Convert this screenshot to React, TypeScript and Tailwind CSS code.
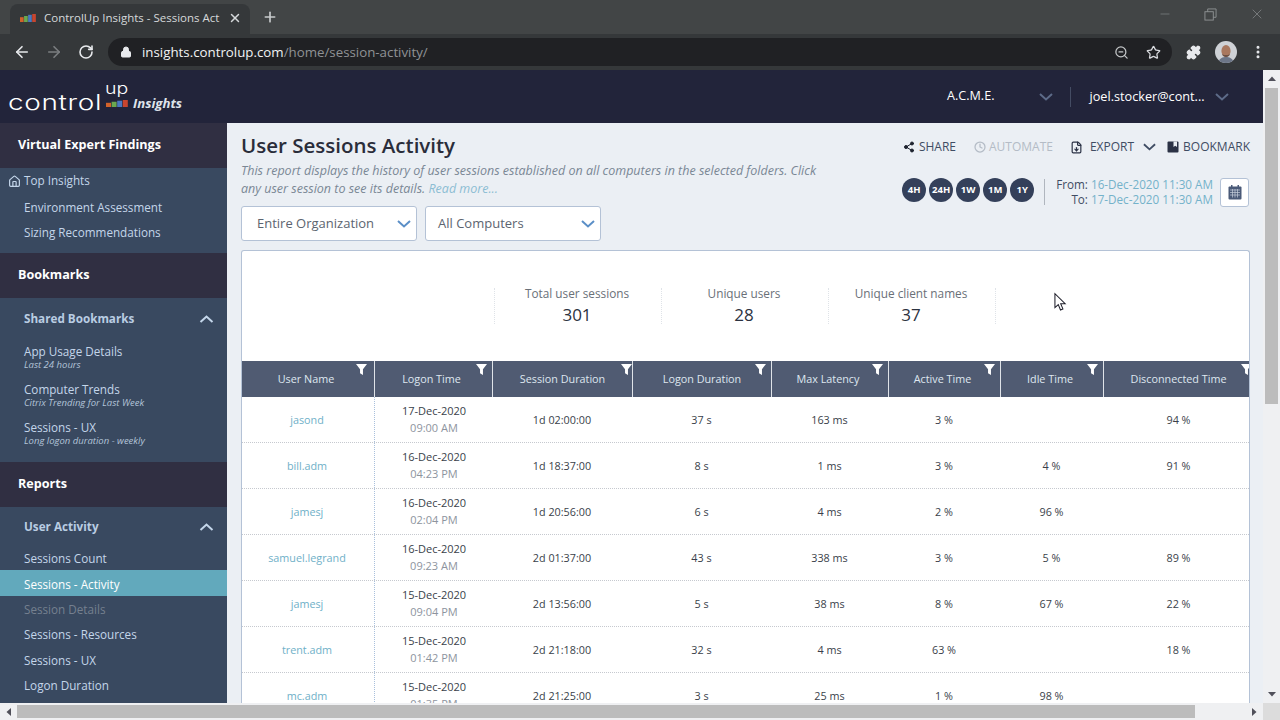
import React from 'react'
import { ArrowLeft, ArrowRight, RotateCw, Lock, ZoomOut, Star, Puzzle, MoreVertical, X, Plus, Minus, Home, Share2, Clock, FileDown } from 'lucide-react'

const rows = [
    ['jasond', '17-Dec-2020', '09:00 AM', '1d 02:00:00', '37 s', '163 ms', '3 %', '', '94 %'],
    ['bill.adm', '16-Dec-2020', '04:23 PM', '1d 18:37:00', '8 s', '1 ms', '3 %', '4 %', '91 %'],
    ['jamesj', '16-Dec-2020', '02:04 PM', '1d 20:56:00', '6 s', '4 ms', '2 %', '96 %', ''],
    ['samuel.legrand', '16-Dec-2020', '09:23 AM', '2d 01:37:00', '43 s', '338 ms', '3 %', '5 %', '89 %'],
    ['jamesj', '15-Dec-2020', '09:04 PM', '2d 13:56:00', '5 s', '38 ms', '8 %', '67 %', '22 %'],
    ['trent.adm', '15-Dec-2020', '01:42 PM', '2d 21:18:00', '32 s', '4 ms', '63 %', '', '18 %'],
    ['mc.adm', '15-Dec-2020', '01:35 PM', '2d 21:25:00', '3 s', '25 ms', '1 %', '98 %', ''],
]

const columns = ['User Name', 'Logon Time', 'Session Duration', 'Logon Duration', 'Max Latency', 'Active Time', 'Idle Time', 'Disconnected Time']

const gridCols = 'grid grid-cols-[133px_118px_140px_139px_117px_112px_103px_153px]'

function BarsIcon({ className }: { className?: string }) {
    return (
        <svg viewBox="0 0 22 10" preserveAspectRatio="none" className={className}>
            <rect x="0" y="4" width="5" height="6" fill="#d2622a" />
            <rect x="5.6" y="2.5" width="5" height="7.5" fill="#6aa84f" />
            <rect x="11.2" y="1" width="5" height="9" fill="#4a78c0" />
            <rect x="16.8" y="0" width="5" height="10" fill="#c8452f" />
        </svg>
    )
}

// wide flat chevron, the lucide one is too narrow for this UI
function Chev({ className, up }: { className?: string; up?: boolean }) {
    return (
        <svg viewBox="0 0 14 8" fill="none" stroke="currentColor" strokeWidth="2" className={className}>
            <path d={up ? 'M1 7L7 1.5L13 7' : 'M1 1L7 6.5L13 1'} />
        </svg>
    )
}

function FilterIcon({ pos }: { pos: string }) {
    return (
        <svg viewBox="0 0 12 12" className={`w-[11px] h-[11px] absolute top-[3px] ${pos}`}>
            <path d="M0 0H12L7.6 5.6V12L4.4 10V5.6Z" fill="#fff" />
        </svg>
    )
}

function Cursor() {
    return (
        <svg viewBox="0 0 14 20" className="w-[13px] h-[20px] absolute left-[1054px] top-[292px]">
            <path d="M1 1V16L4.6 12.8L7 18.6L9.6 17.4L7.2 11.8H12Z" fill="#fff" stroke="#1c1c28" strokeWidth="1.1" />
        </svg>
    )
}

function Avatar() {
    return (
        <svg viewBox="0 0 22 22" className="w-[22px] h-[22px] rounded-full">
            <rect width="22" height="22" fill="#cfd2d6" />
            <path d="M3 22C4 17 8 16 11 16C14 16 18 17 19 22Z" fill="#6d7688" />
            <ellipse cx="11" cy="10" rx="4.6" ry="6" fill="#a9785f" />
            <path d="M7 13C8 17 14 17 15 13L13 14H9Z" fill="#6c5146" />
        </svg>
    )
}

function BookmarkIcon() {
    return (
        <svg viewBox="0 0 12 12" className="w-[12px] h-[12px] mr-[4px]">
            <rect x="0.5" y="0.5" width="11" height="11" rx="1" fill="#2b3245" />
            <path d="M6.5 0.5H10V6L8.2 4.8L6.5 6Z" fill="#ebeff4" />
        </svg>
    )
}

function CalendarIcon() {
    return (
        <svg viewBox="0 0 14 15" className="w-[14px] h-[15px]">
            <rect x="0.5" y="1.5" width="13" height="13" rx="1" fill="#4a5a78" />
            <rect x="3" y="0" width="1.5" height="3" fill="#4a5a78" />
            <rect x="9.5" y="0" width="1.5" height="3" fill="#4a5a78" />
            <path d="M2 5H12M2 7.5H12M2 10H12M4.5 4V12.5M7 4V12.5M9.5 4V12.5" stroke="#c6cedb" strokeWidth="0.7" />
        </svg>
    )
}

function NavHeader({ title }: { title: string }) {
    return (
        <div className="h-[45px] bg-[#302f42] flex items-center pl-[18px] text-[12.6px] font-bold text-white shrink-0">{title}</div>
    )
}

function NavItem({ label, active, muted, h = 'h-[26px]', pt = 'pt-[1px]' }: { label: string; active?: boolean; muted?: boolean; h?: string; pt?: string }) {
    return (
        <div className={`${h} ${pt} flex items-center pl-[24px] text-[11.7px] ${active ? 'bg-[#62a9bc] text-white' : muted ? 'text-[#75808f]' : 'text-[#c4d6ea]'}`}>
            {label}
        </div>
    )
}

function NavGroupTitle({ label, h }: { label: string; h: string }) {
    return (
        <div className={`${h} flex items-center justify-between pl-[24px] pr-[13px] pt-[2px] text-[11.7px] font-bold text-[#b9cde3]`}>
            {label}
            <Chev up className="w-[15px] h-[8px] text-[#c4d6ea]" />
        </div>
    )
}

function Bookmarked({ label, sub }: { label: string; sub: string }) {
    return (
        <div className="h-[38px] flex flex-col justify-center pl-[24px]">
            <div className="text-[11.7px] leading-[16px] text-[#c4d6ea]">{label}</div>
            <div className="text-[9.5px] leading-[12px] italic text-[#b3c4d8]">{sub}</div>
        </div>
    )
}

function Sidebar() {
    return (
        <div className="w-[227px] shrink-0 bg-[#394960] overflow-hidden flex flex-col">
            <NavHeader title="Virtual Expert Findings" />
            <div className="pb-[8px]">
                <div className="h-[26px] flex items-center pl-[8px] gap-[3px] text-[11.7px] text-[#c4d6ea]">
                    <Home className="w-[13px] h-[13px]" strokeWidth={2.2} />
                    Top Insights
                </div>
                <NavItem label="Environment Assessment" />
                <NavItem label="Sizing Recommendations" h="h-[25px]" />
            </div>
            <NavHeader title="Bookmarks" />
            <div className="pb-[10px]">
                <NavGroupTitle label="Shared Bookmarks" h="h-[40px]" />
                <Bookmarked label="App Usage Details" sub="Last 24 hours" />
                <Bookmarked label="Computer Trends" sub="Citrix Trending for Last Week" />
                <Bookmarked label="Sessions - UX" sub="Long logon duration - weekly" />
            </div>
            <NavHeader title="Reports" />
            <NavGroupTitle label="User Activity" h="h-[37px]" />
            <NavItem label="Sessions Count" pt="pt-[3px]" />
            <NavItem label="Sessions - Activity" active pt="pt-[3px]" />
            <NavItem label="Session Details" muted />
            <NavItem label="Sessions - Resources" h="h-[25px]" />
            <NavItem label="Sessions - UX" />
            <NavItem label="Logon Duration" h="h-[25px]" />
        </div>
    )
}

function SelectBox({ label, pl }: { label: string; pl: string }) {
    return (
        <div className={`w-[176px] h-[35px] bg-white border border-[#b4c2d6] rounded-[3px] flex items-center justify-between ${pl} pr-[5px] text-[13px] text-[#5c6470]`}>
            {label}
            <Chev className="w-[14px] h-[8px] text-[#5b8fc7]" />
        </div>
    )
}

function Stat({ label, value }: { label: string; value: string }) {
    return (
        <div className="w-[167px] h-[36px] pr-[2px] border-r border-dotted border-[#dfe3e8] flex flex-col items-center justify-center">
            <div className="text-[11.8px] leading-[16px] text-[#6a7078]">{label}</div>
            <div className="mt-[2px] text-[17px] leading-[24px] text-[#2c3240]">{value}</div>
        </div>
    )
}

function ReportTable() {
    return (
        <div className="mt-[9px] w-[1009px] bg-white border-l border-r border-t border-[#b4c2d6] rounded-t-[3px] flex-1 overflow-hidden">
            <div className="h-[110px] flex items-center pl-[252px]">
                <div className="w-0 h-[36px] border-r border-dotted border-[#dfe3e8]" />
                <Stat label="Total user sessions" value="301" />
                <Stat label="Unique users" value="28" />
                <Stat label="Unique client names" value="37" />
            </div>
            <div className={`${gridCols} h-[36px] bg-[#505b72]`}>
                {columns.map((c, i) => (
                    <div key={c} className={`relative flex items-center justify-center text-[10.8px] text-[#dfe7f0] pt-[1px] ${i === 2 || i === 3 ? '' : 'pr-[4px]'} ${i < 7 ? 'border-r border-[#dfe3e8]' : ''}`}>
                        {c}
                        <FilterIcon pos={i === 2 ? 'right-[0px]' : i === 0 ? 'right-[7px]' : 'right-[5px]'} />
                    </div>
                ))}
            </div>
            {rows.map((r, i) => (
                <div key={i} className={`${gridCols} h-[46px] border-b border-dotted border-[#c6c9cf] text-[10.8px] text-[#3a3f4a]`}>
                    <div className="flex items-center justify-center pt-[2px] pr-[2px] border-r border-dotted border-[#a9c0dc] text-[#6fb0c8]">{r[0]}</div>
                    <div className="flex flex-col items-center justify-center pb-[2px] text-[11px]">
                        <div className="leading-[17px]">{r[1]}</div>
                        <div className="leading-[17px] text-[#8d949e]">{r[2]}</div>
                    </div>
                    {r.slice(3).map((v, j) => (
                        <div key={j} className={`flex items-center justify-center pt-[2px] ${j === 5 ? 'pr-[4px]' : 'pr-[2px]'}`}>{v}</div>
                    ))}
                </div>
            ))}
        </div>
    )
}

function ScrollArrow({ d }: { d: string }) {
    return (
        <svg viewBox="0 0 8 8" className="w-[8px] h-[8px]">
            <path d={d} fill="#50505a" />
        </svg>
    )
}

function Main() {
    return (
        <div className="flex-1 bg-[#ebeff4] pl-[14px] overflow-hidden flex flex-col min-w-0">
            <div className="flex justify-between w-[1009px]">
                <div>
                    <h1 className="mt-[8px] text-[20.5px] leading-[28px] font-semibold text-[#2a2d3a]">User Sessions Activity</h1>
                    <p className="mt-[3px] w-[590px] text-[12.5px] leading-[18px] italic text-[#7a8795]">
                        This report displays the history of user sessions established on all computers in the selected folders. Click any user session to see its details. <span className="text-[#8cbdd3]">Read more...</span>
                    </p>
                    <div className="mt-[8px] flex gap-[8px]">
                        <SelectBox label="Entire Organization" pl="pl-[15px]" />
                        <SelectBox label="All Computers" pl="pl-[12px]" />
                    </div>
                </div>
                <div className="flex flex-col items-end">
                    <div className="mt-[15px] h-[18px] flex items-center text-[12px] text-[#3f4c63]">
                        <Share2 className="w-[12px] h-[12px] mr-[4px] text-[#1f2430]" fill="#1f2430" />
                        SHARE
                        <Clock className="w-[12px] h-[12px] ml-[18px] mr-[3px] text-[#b4bcc6]" strokeWidth={2.5} />
                        <span className="text-[#b4bcc6]">AUTOMATE</span>
                        <FileDown className="w-[13px] h-[13px] ml-[17px] mr-[7px] text-[#2b3245]" strokeWidth={2.2} />
                        EXPORT
                        <Chev className="w-[13px] h-[8px] ml-[9px] mr-[11px] text-[#3f4c63]" />
                        <BookmarkIcon />
                        BOOKMARK
                    </div>
                    <div className="mt-[21px] flex items-center mr-[1px]">
                        <div className="flex gap-[3px] mb-[4px]">
                            {['4H', '24H', '1W', '1M', '1Y'].map((t) => (
                                <div key={t} className="w-[24px] h-[24px] rounded-full bg-[#34405a] text-white text-[9.5px] font-bold flex items-center justify-center">{t}</div>
                            ))}
                        </div>
                        <div className="ml-[10px] w-px h-[26px] bg-[#b0b6be]" />
                        <div className="ml-[11px] text-[11.7px] leading-[15px] text-right text-[#3f4c63]">
                            <div>From: <span className="text-[#74b2ca]">16-Dec-2020 11:30 AM</span></div>
                            <div>To: <span className="text-[#74b2ca]">17-Dec-2020 11:30 AM</span></div>
                        </div>
                        <div className="ml-[7px] w-[29px] h-[29px] bg-white border border-[#b4c2d6] rounded-[3px] flex items-center justify-center">
                            <CalendarIcon />
                        </div>
                    </div>
                </div>
            </div>
            <ReportTable />
        </div>
    )
}

export default function App() {
    return (
        <div className="relative w-[1280px] h-[720px] overflow-hidden flex flex-col font-['Open_Sans',sans-serif]">
            <div className="h-[34px] bg-[#424546] flex items-end shrink-0 pl-[10px]">
                <div className="w-[240px] h-[30px] pb-[2px] bg-[#35383a] rounded-t-[8px] flex items-center pl-[10px] pr-[8px] text-[11.5px] text-[#d5d8da]">
                    <BarsIcon className="w-[16px] h-[8px] mr-[8px]" />
                    <span className="flex-1 whitespace-nowrap overflow-hidden">ControlUp Insights - Sessions Act</span>
                    <X className="w-[14px] h-[14px] ml-[6px] text-[#d5d8da]" strokeWidth={2.5} />
                </div>
                <Plus className="w-[16px] h-[16px] ml-[12px] mb-[9px] text-[#c7cacc]" strokeWidth={2.5} />
                <div className="ml-auto flex items-center self-start mt-[6px] mr-[15px] gap-[32px] text-[#8f9294]">
                    <Minus className="w-[14px] h-[14px]" strokeWidth={1} />
                    <svg viewBox="0 0 14 14" className="w-[13px] h-[13px]" fill="none" stroke="currentColor">
                        <rect x="1" y="4" width="9" height="9" />
                        <path d="M4 4V1H13V10H10" />
                    </svg>
                    <X className="w-[16px] h-[16px]" strokeWidth={1} />
                </div>
            </div>
            <div className="h-[36px] bg-[#35383a] flex items-center shrink-0 pl-[13px] pr-[11px]">
                <ArrowLeft className="w-[18px] h-[18px] text-[#e8eaed]" strokeWidth={2.2} />
                <ArrowRight className="w-[18px] h-[18px] ml-[14px] text-[#7b7e80]" strokeWidth={2.2} />
                <RotateCw className="w-[16px] h-[16px] ml-[15px] text-[#e8eaed]" strokeWidth={2.4} />
                <div className="ml-[14px] w-[1064px] h-[28px] bg-[#202124] rounded-full flex items-center pl-[12px] pr-[11px] text-[13.3px]">
                    <Lock className="w-[12px] h-[12px] mr-[10px] text-[#e8eaed]" fill="#e8eaed" />
                    <span className="text-[#f1f3f4] pt-[1px]">insights.controlup.com</span>
                    <span className="text-[#8f9295] pt-[1px]">/home/session-activity/</span>
                    <ZoomOut className="w-[15px] h-[15px] ml-auto text-[#c4c7c9]" strokeWidth={2} />
                    <Star className="w-[15px] h-[15px] ml-[17px] text-[#dadce0]" strokeWidth={2} />
                </div>
                <Puzzle className="w-[15px] h-[15px] ml-[14px] text-[#e8eaed]" fill="#e8eaed" />
                <div className="ml-[14px]"><Avatar /></div>
                <MoreVertical className="w-[16px] h-[16px] ml-[13px] text-[#e8eaed]" strokeWidth={2.5} />
            </div>
            <div className="flex-1 flex min-h-0">
                <div className="flex-1 flex flex-col min-w-0">
                    <div className="h-[53px] bg-[#22243a] flex items-center shrink-0 pl-[9px] text-white">
                        <div className="relative w-[175px] h-[30px]">
                            <span className="absolute left-[-1px] top-[9px] origin-left scale-x-[1.33] text-[21px] leading-[24px] font-light font-['Inter',sans-serif] tracking-[0.5px]">control</span>
                            <span className="absolute left-[96px] top-[-1px] origin-left scale-x-[1.3] text-[15px] leading-[16px] font-light font-['Inter',sans-serif]">up</span>
                            <BarsIcon className="absolute left-[97px] top-[18px] w-[22px] h-[7px]" />
                            <span className="absolute left-[124px] top-[13px] text-[13.2px] leading-[16px] font-bold italic text-[#dfe3ea]">Insights</span>
                        </div>
                        <span className="ml-[763px] text-[12.6px]">A.C.M.E.</span>
                        <Chev className="w-[14px] h-[8px] ml-[45px] text-[#5d6b88]" />
                        <div className="ml-[17px] w-px h-[20px] bg-[#444c63]" />
                        <span className="ml-[18px] text-[12.7px]">joel.stocker@cont...</span>
                        <Chev className="w-[14px] h-[8px] ml-[10px] text-[#5d6b88]" />
                    </div>
                    <div className="flex-1 flex min-h-0">
                        <Sidebar />
                        <Main />
                    </div>
                </div>
                <div className="w-[17px] shrink-0 bg-[#eff0f2] flex flex-col items-center">
                    <div className="h-[18px] flex items-center"><ScrollArrow d="M4 1.5L8 6H0Z" /></div>
                    <div className="w-[13px] h-[316px] bg-[#bcbcbc]" />
                    <div className="mt-auto h-[18px] flex items-center"><ScrollArrow d="M4 6.5L8 2H0Z" /></div>
                </div>
            </div>
            <div className="h-[17px] shrink-0 bg-[#eff0f2] flex items-center">
                <div className="w-[17px] flex justify-center"><ScrollArrow d="M1.5 4L6 0V8Z" /></div>
                <div className="w-[1178px] h-[13px] bg-[#bcbcbc]" />
                <div className="ml-auto w-[18px] flex justify-center mr-[17px]"><ScrollArrow d="M6.5 4L2 0V8Z" /></div>
                <div className="absolute right-0 bottom-0 w-[17px] h-[17px] bg-[#dcdcdc]" />
            </div>
            <Cursor />
        </div>
    )
}
